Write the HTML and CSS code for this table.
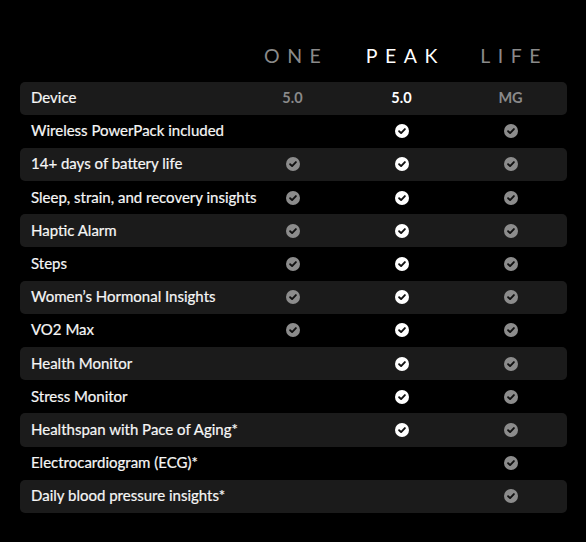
FILE: index.html
```html
<!DOCTYPE html>
<html>
<head>
<meta charset="utf-8">
<link rel="stylesheet" href="styles.css">
</head>
<body>
<svg width="0" height="0" class="defs">
  <symbol id="chk" viewBox="0 0 14 14">
    <circle cx="7" cy="7" r="7" fill="currentColor"/>
    <path d="M4.1 7.2 L6.1 9.1 L9.9 5.1" fill="none" stroke="#111" stroke-width="1.9" stroke-linecap="round" stroke-linejoin="round"/>
  </symbol>
</svg>
<div class="page">
  <div class="table">
    <div class="head">
      <div></div>
      <div class="plan dim">ONE</div>
      <div class="plan">PEAK</div>
      <div class="plan dim">LIFE</div>
    </div>
    <div class="row alt">
      <div class="label">Device</div>
      <div class="val dim">5.0</div>
      <div class="val">5.0</div>
      <div class="val dim">MG</div>
    </div>
    <div class="row">
      <div class="label">Wireless PowerPack included</div>
      <div class="cell"></div>
      <div class="cell"><svg class="ck on"><use href="#chk"/></svg></div>
      <div class="cell"><svg class="ck"><use href="#chk"/></svg></div>
    </div>
    <div class="row alt">
      <div class="label">14+ days of battery life</div>
      <div class="cell"><svg class="ck"><use href="#chk"/></svg></div>
      <div class="cell"><svg class="ck on"><use href="#chk"/></svg></div>
      <div class="cell"><svg class="ck"><use href="#chk"/></svg></div>
    </div>
    <div class="row">
      <div class="label">Sleep, strain, and recovery insights</div>
      <div class="cell"><svg class="ck"><use href="#chk"/></svg></div>
      <div class="cell"><svg class="ck on"><use href="#chk"/></svg></div>
      <div class="cell"><svg class="ck"><use href="#chk"/></svg></div>
    </div>
    <div class="row alt">
      <div class="label">Haptic Alarm</div>
      <div class="cell"><svg class="ck"><use href="#chk"/></svg></div>
      <div class="cell"><svg class="ck on"><use href="#chk"/></svg></div>
      <div class="cell"><svg class="ck"><use href="#chk"/></svg></div>
    </div>
    <div class="row">
      <div class="label">Steps</div>
      <div class="cell"><svg class="ck"><use href="#chk"/></svg></div>
      <div class="cell"><svg class="ck on"><use href="#chk"/></svg></div>
      <div class="cell"><svg class="ck"><use href="#chk"/></svg></div>
    </div>
    <div class="row alt">
      <div class="label">Women’s Hormonal Insights</div>
      <div class="cell"><svg class="ck"><use href="#chk"/></svg></div>
      <div class="cell"><svg class="ck on"><use href="#chk"/></svg></div>
      <div class="cell"><svg class="ck"><use href="#chk"/></svg></div>
    </div>
    <div class="row">
      <div class="label">VO2 Max</div>
      <div class="cell"><svg class="ck"><use href="#chk"/></svg></div>
      <div class="cell"><svg class="ck on"><use href="#chk"/></svg></div>
      <div class="cell"><svg class="ck"><use href="#chk"/></svg></div>
    </div>
    <div class="row alt">
      <div class="label">Health Monitor</div>
      <div class="cell"></div>
      <div class="cell"><svg class="ck on"><use href="#chk"/></svg></div>
      <div class="cell"><svg class="ck"><use href="#chk"/></svg></div>
    </div>
    <div class="row">
      <div class="label">Stress Monitor</div>
      <div class="cell"></div>
      <div class="cell"><svg class="ck on"><use href="#chk"/></svg></div>
      <div class="cell"><svg class="ck"><use href="#chk"/></svg></div>
    </div>
    <div class="row alt">
      <div class="label">Healthspan with Pace of Aging*</div>
      <div class="cell"></div>
      <div class="cell"><svg class="ck on"><use href="#chk"/></svg></div>
      <div class="cell"><svg class="ck"><use href="#chk"/></svg></div>
    </div>
    <div class="row">
      <div class="label">Electrocardiogram (ECG)*</div>
      <div class="cell"></div>
      <div class="cell"></div>
      <div class="cell"><svg class="ck"><use href="#chk"/></svg></div>
    </div>
    <div class="row alt">
      <div class="label">Daily blood pressure insights*</div>
      <div class="cell"></div>
      <div class="cell"></div>
      <div class="cell"><svg class="ck"><use href="#chk"/></svg></div>
    </div>
  </div>
</div>
</body>
</html>
```
FILE: styles.css
```css
html, body {
  margin: 0;
  padding: 0;
  background: #000;
}
.defs {
  position: absolute;
  width: 0;
  height: 0;
}
.page {
  width: 586px;
  height: 542px;
  background: #000;
  padding: 46px 19px 0 20px;
  box-sizing: border-box;
  font-family: "Lato", "Open Sans", sans-serif;
  color: #fff;
}
.table {
  display: flex;
  flex-direction: column;
  width: 547px;
}
.head, .row {
  display: grid;
  grid-template-columns: minmax(0, 1fr) 109px 109px 109px;
  align-items: center;
  padding-right: 2px;
}
.head {
  height: 35.5px;
  align-items: start;
}
.plan {
  text-align: center;
  font-family: "Lato", sans-serif;
  font-weight: 400;
  font-size: 19.5px;
  letter-spacing: 7.5px;
  padding-left: 7.5px;
  color: #fff;
  line-height: 20px;
}
.plan.dim {
  color: #8a8a8a;
}
.row {
  height: 33.2px;
  border-radius: 5px;
}
.row.alt {
  background: #1b1b1b;
}
.label {
  padding-left: 11px;
  padding-bottom: 2px;
  font-size: 15px;
  color: #f6f6f6;
  white-space: nowrap;
  -webkit-text-stroke: 0.2px #f6f6f6;
}
.val {
  text-align: center;
  font-weight: 700;
  font-size: 14.5px;
  padding-bottom: 2px;
  color: #fff;
}
.val.dim {
  color: #8a8a8a;
}
.cell {
  display: flex;
  justify-content: center;
  align-items: center;
}
.ck {
  width: 14px;
  height: 14px;
  color: #8c8c8c;
}
.ck.on {
  color: #fff;
}
```
